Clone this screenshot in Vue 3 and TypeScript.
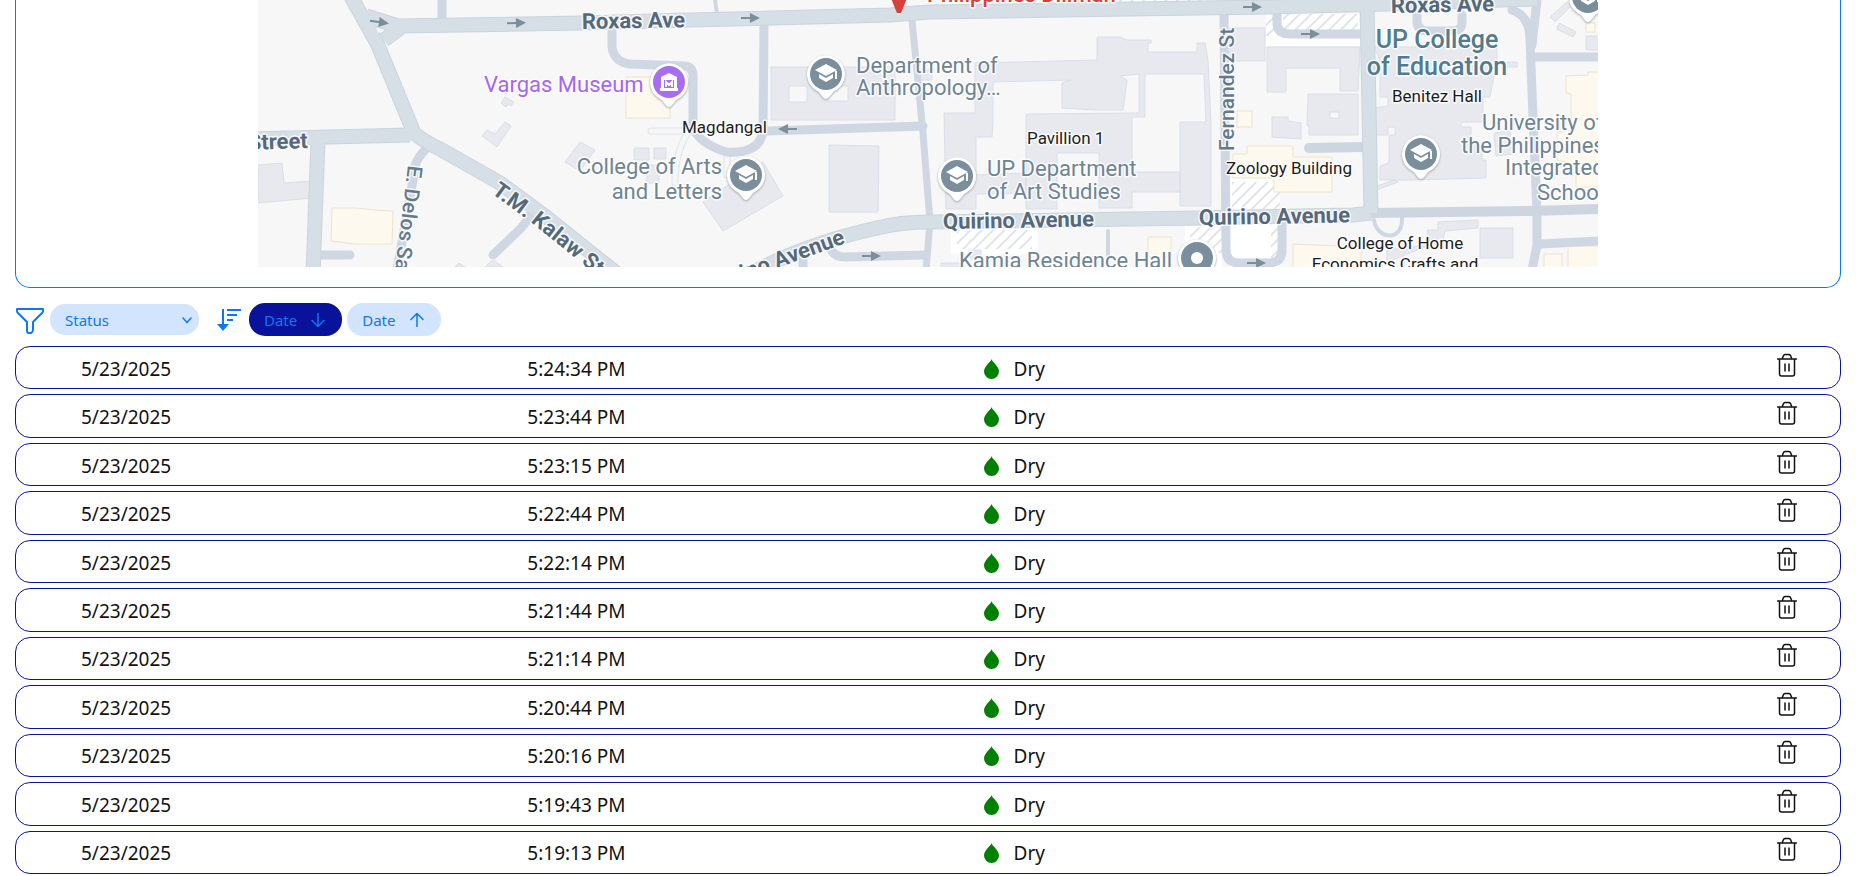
<script setup lang="ts">
import { ref, computed } from 'vue'

interface Reading {
  date: string
  time: string
  status: string
}

const times: string[] = [
  '5:24:34 PM', '5:23:44 PM', '5:23:15 PM', '5:22:44 PM', '5:22:14 PM', '5:21:44 PM',
  '5:21:14 PM', '5:20:44 PM', '5:20:16 PM', '5:19:43 PM', '5:19:13 PM',
]
const readings = ref<Reading[]>(times.map((time) => ({ date: '5/23/2025', time, status: 'Dry' })))
const status = ref('')
const order = ref<'desc' | 'asc'>('desc')

const visible = computed(() => {
  const list = readings.value.filter((r) => !status.value || r.status === status.value)
  return order.value === 'desc' ? list : [...list].reverse()
})

function remove(reading: Reading) {
  readings.value = readings.value.filter((r) => r !== reading)
}

// One-way arrows: x, y, rotation
const arrows: [number, number, number][] = [
  [379, 22, 8], [516, 23, -1], [750, 18, 0], [788, 129, 180],
  [871, 256, 0], [1252, 7, 0], [1256, 263, 0], [1310, 34, 0],
]
const schoolPins: [number, number][] = [[826, 74], [746, 175], [957, 176], [1421, 154], [1588, -3]]
</script>

<template>
  <main class="page">
    <section class="map-card" aria-label="Location">
      <svg class="map" viewBox="258 0 1340 267" role="img" aria-label="Campus map">
        <defs>
          <pattern id="hatch" width="8" height="8" patternUnits="userSpaceOnUse" patternTransform="rotate(45)">
            <rect width="8" height="8" fill="#ffffff" />
            <path d="M1 0V8" stroke="#e1e4ea" stroke-width="2" />
          </pattern>
          <path id="kalaw" d="M491 193L533 224L580 262L640 312" />
          <path id="pin" d="M0 25C-3 25-4 21-8 17.500A19 19 0 1 1 8 17.500C4 21 3 25 0 25Z" />
        </defs>
        <rect x="258" width="1340" height="267" fill="#f7f7f7" />

        <g class="paved">
          <rect x="951" y="228" width="87" height="26" />
          <rect x="1185" y="226" width="37" height="41" />
          <rect x="1230" y="178" width="50" height="89" />
          <rect x="1266" y="14" width="94" height="32" />
        </g>
        <g fill="url(#hatch)">
          <rect x="957" y="230" width="75" height="19" />
          <rect x="1190" y="227" width="32" height="26" />
          <rect x="1232" y="182" width="42" height="27" />
          <rect x="1271" y="190" width="9" height="70" />
          <rect x="1283" y="14" width="75" height="16" />
          <rect x="1090" y="0" width="117" height="5" />
          <rect x="1266" y="14" width="8" height="22" />
        </g>

        <g class="building">
          <path d="M258 165L282 163L284 183L311 181L312 198L258 203Z" />
          <path d="M505 97L514 102L511 106L508 104L506 107L501 103Z" />
          <path d="M505 122L511 126L497 147L482 136L487 130L495 134Z" />
          <path d="M580 142L595 150L580 171L565 162Z" />
          <path d="M485 267L493 260L503 267ZM455 267L459 263L465 267Z" />
          <path fill-rule="evenodd" d="M771 67H895V120H771ZM789 86V102H807V86ZM828 86V101H848V86Z" />
          <path d="M829 145L879 146L878 212L829 212Z" />
          <path d="M763 162L783 196L723 231L703 202Z" />
          <path d="M634 148H649V160H634ZM654 148H666V159H654ZM647 165H659V183H647Z" />
          <path d="M975 63L1097 60V37H1120L1127 40H1151V43H1148V52H1197V43H1205L1208 60L1211 123V206H1180V122H1206L1204 74H1145V117H1132V172H1180V192H1132V208H1099V153H1057V209H1026V114L1139 113V74L1120 76L1127 80L1123 110H1097L1062 108V83L1071 80L993 82V122L992 137H976V175L1026 173V193L976 194V209H946L944 113H975Z" />
          <rect x="1230" y="28" width="35" height="33" />
          <path d="M1267 47H1360L1358 91H1340V68H1286V92H1267Z" />
          <path fill-rule="evenodd" d="M1308 94H1358V135H1309V126L1307 125ZM1330 112V118H1339V112Z" />
          <path d="M1272 117H1288V121L1301 123V139L1272 137Z" />
          <path d="M1374 47H1497V60L1490 97H1483V122H1461V127H1471V137L1482 147V160H1486V178L1410 180H1380V166L1389 163V135H1395V127H1388V135H1374V108L1388 106V97H1380V60Z" />
          <path d="M1374 187L1395 180L1398 182L1376 190Z" />
          <path d="M1507 62H1517V67H1507ZM1494 133L1510 131L1513 154L1496 156Z" />
          <path d="M1427 230H1438V222L1478 220V228L1445 231L1443 240L1387 262V250L1430 245Z" />
          <path d="M1480 228H1513V258H1480Z" />
          <path d="M1550 17L1567 2L1571 6L1555 22ZM1559 23L1576 32L1573 37L1557 29ZM1586 36H1600V50H1586Z" />
          <path d="M970 250H981V258H970ZM941 263H960V270H941ZM918 70H932V80H918Z" />
        </g>
        <g class="landmark">
          <path d="M332 208H355L375 210L393 211L392 244L355 244L331 241Z" />
          <rect x="626" y="77" width="44" height="41" />
          <rect x="1237" y="111" width="15" height="16" />
          <path d="M1233 154H1247V146H1293V157H1332V192H1274V178H1233Z" />
          <rect x="1148" y="237" width="23" height="20" />
          <path d="M1293 244L1361 247V270H1293Z" />
          <path d="M1566 76L1588 75V72H1600V187H1576V165L1557 160V132L1571 130V94L1566 93Z" />
          <rect x="1586" y="23" width="9" height="9" />
          <rect x="1568" y="246" width="34" height="26" />
          <rect x="1544" y="254" width="18" height="18" />
        </g>

        <g class="lane">
          <path class="lane-edge" d="M651 131H684M688 133C681 142 675 160 675 183M727 154V175" />
          <path class="lane-fill" d="M651 131H684M688 133C681 142 675 160 675 183M727 154V175" />
        </g>

        <g class="minor">
          <path d="M322 255H350M426 149Q417 158 415 166L413 180L397 270M533 210Q526 224 517 232L493 255" />
          <path d="M442 0V20" />
          <path d="M612 32V47Q614 62 630 64L685 66Q693 67 693 76V127Q699 144 727 152Q760 154 763 131L764 25" />
          <path d="M768 131L923 126" />
          <path class="thin" d="M912 20L923 133L930 222L926 270" />
          <path d="M830 248Q834 257 845 257L925 255M803 257V270" />
          <path d="M1224 15L1226 250Q1226 262 1238 263H1270Q1282 262 1282 250V220" />
          <path d="M1277 12V24Q1278 34 1290 34H1362" />
          <path d="M1417 15V22Q1418 31 1428 31H1452Q1462 31 1462 22V15" />
          <path d="M1512 10Q1530 16 1530 40L1533 117L1537 213V245L1532 270" />
          <path d="M1537 0L1532 45M1537 57H1600M1540 244L1600 241" />
          <path class="narrow" d="M1374 220C1377 240 1403 242 1402 218M715 0L717 14M1108 231V256" />
        </g>
        <g class="stub">
          <path d="M1309 148L1365 147" />
          <path d="M1371 213L1533 211L1600 209" />
        </g>
        <g v-for="layer in ['road-edge', 'road']" :key="layer" :class="layer">
          <path d="M350 -5L377 43L414 133Q423 141 440 149L500 183L545 216L590 252L620 276" />
          <path d="M366 16L398 26L583 23L690 20L890 15L930 12L1130 9L1270 7L1387 4L1537 -1" />
          <path d="M250 139L410 135M318 140L313 275" />
          <path d="M384 40L400 28" />
          <path d="M745 277Q800 245 877 228Q900 222 930 222L1197 218L1353 215L1371 213M1367 5L1371 213" />
        </g>
        <path d="M376 28L382 30L378 33Z" fill="#f7f7f7" />

        <g v-for="(a, i) in arrows" :key="i" class="arrow" :transform="`translate(${a[0]} ${a[1]}) rotate(${a[2]})`">
          <path d="M-9 -1H0V-5L10 0L0 5V1H-9Z" />
        </g>

        <g class="street">
          <text x="582" y="29" transform="rotate(-1 582 29)">Roxas Ave</text>
          <text x="1391" y="13" transform="rotate(-1 1391 13)">Roxas Ave</text>
          <text x="308" y="148" text-anchor="end" transform="rotate(-2 308 148)">Street</text>
          <text x="943" y="229" transform="rotate(-1 943 229)">Quirino Avenue</text>
          <text x="1199" y="225" transform="rotate(-1 1199 225)">Quirino Avenue</text>
          <text x="846" y="243" text-anchor="end" transform="rotate(-20 846 243)">Quirino Avenue</text>
          <text><textPath href="#kalaw">T.M. Kalaw St</textPath></text>
          <text class="side" x="408" y="165" transform="rotate(97 408 165)">E. Delos Santos</text>
          <text class="side" x="1234" y="151" transform="rotate(-90 1234 151)">Fernandez St</text>
        </g>

        <g v-for="(p, i) in schoolPins" :key="i" class="pin" :transform="`translate(${p[0]} ${p[1]})`">
          <use href="#pin" />
          <circle r="16" fill="#7b8e9b" />
          <path d="M0 -10L11 -4L0 2L-11 -4ZM-7 0L0 4L7 0V4L0 8L-7 4ZM9 -3H11V5H9Z" fill="#ffffff" />
        </g>
        <g class="pin" transform="translate(1197 258)">
          <use href="#pin" />
          <circle r="16" fill="#7b8e9b" />
          <circle r="6" fill="#ffffff" />
        </g>
        <g class="pin" transform="translate(669 82)">
          <use href="#pin" />
          <circle r="16" fill="#a96ef0" />
          <path d="M0 -9L8 -5V-2H-8V-5ZM-8 -2H-5V6H-8ZM8 -2H5V6H8ZM-9 6H9V9H-9Z" fill="#ffffff" />
          <path d="M-3 5V0L0 3L3 0V5" fill="none" stroke="#ffffff" stroke-width="2" />
        </g>
        <path d="M891 -2H907Q904 6 901 13H897Q894 6 891 -2Z" fill="#d3433c" />

        <g class="place">
          <text class="museum" x="484" y="92">Vargas Museum</text>
          <text x="856" y="73">Department of</text>
          <text x="856" y="95">Anthropology…</text>
          <text x="722" y="174" text-anchor="end">College of Arts</text>
          <text x="722" y="199" text-anchor="end">and Letters</text>
          <text x="987" y="176">UP Department</text>
          <text x="987" y="199">of Art Studies</text>
          <text x="959" y="268">Kamia Residence Hall</text>
          <text x="1482" y="130">University of</text>
          <text x="1461" y="153">the Philippines</text>
          <text x="1505" y="175">Integrated</text>
          <text x="1537" y="200">School</text>
          <text class="campus" x="927" y="2">Philippines Diliman</text>
        </g>
        <g class="college">
          <text x="1437" y="48" text-anchor="middle">UP College</text>
          <text x="1437" y="75" text-anchor="middle">of Education</text>
        </g>
        <g class="hall">
          <text x="682" y="133">Magdangal</text>
          <text x="1027" y="144">Pavillion 1</text>
          <text x="1226" y="174">Zoology Building</text>
          <text x="1392" y="102">Benitez Hall</text>
          <text x="1400" y="249" text-anchor="middle">College of Home</text>
          <text x="1395" y="270" text-anchor="middle">Economics Crafts and</text>
        </g>
      </svg>
    </section>

    <div class="toolbar">
      <svg class="filter-icon" viewBox="0 0 28 28" aria-hidden="true">
        <path d="M1 2H27V4Q27 5 26 6L17 15V23Q17 25 15 26H13Q11 26 11 24V15L2 6Q1 5 1 4Z" />
      </svg>
      <div class="select-wrap">
        <select v-model="status" aria-label="Status">
          <option value="">Status</option>
          <option value="Dry">Dry</option>
          <option value="Wet">Wet</option>
        </select>
        <svg class="chevron" viewBox="0 0 20 16" aria-hidden="true"><path d="M2 2L10 11L18 2" /></svg>
      </div>
      <svg class="sort-icon" viewBox="0 0 24 24" aria-hidden="true">
        <path d="M6 1V17M10 2H24M10 7H20M10 12H16" />
        <path class="head" d="M0 16H12L6 23Z" />
      </svg>
      <div class="sorts">
        <button type="button" :class="{ active: order === 'desc' }" @click="order = 'desc'">
          Date
          <svg viewBox="0 0 28 28" aria-hidden="true"><path d="M14 1V27M2 15L14 27L26 15" /></svg>
        </button>
        <button type="button" :class="{ active: order === 'asc' }" @click="order = 'asc'">
          Date
          <svg viewBox="0 0 28 28" aria-hidden="true"><path d="M14 27V1M2 13L14 1L26 13" /></svg>
        </button>
      </div>
    </div>

    <table class="readings" aria-label="Readings">
      <tbody>
        <tr v-for="r in visible" :key="r.time">
          <td>{{ r.date }}</td>
          <td>{{ r.time }}</td>
          <td class="state">
            <svg viewBox="0 0 15 20" aria-hidden="true">
              <path d="M7.500 0C8 3 15 7 15 12.500A7.500 7.500 0 0 1 0 12.500C0 7 7 3 7.500 0Z" />
            </svg>
            {{ r.status }}
          </td>
          <td class="actions">
            <button type="button" aria-label="Delete" @click="remove(r)">
              <svg viewBox="0 0 40 48" aria-hidden="true">
                <path d="M1 12H39M5 12V42Q5 46 9 46H31Q35 46 35 42V12M11 10L13 5Q14 3 17 3H23Q26 3 27 5L29 10M16 22V36M24 22V36" />
              </svg>
            </button>
          </td>
        </tr>
      </tbody>
    </table>
  </main>
</template>

<style>
body {
  margin: 0;
  background: #ffffff;
}
</style>

<style scoped>
.page {
  box-sizing: border-box;
  display: flex;
  flex-direction: column;
  min-height: 100vh;
  padding: 0 15px 2px;
  color: #111111;
  font-family: "Segoe UI", "Noto Sans", "Open Sans", sans-serif;
}
.map-card {
  display: flex;
  justify-content: center;
  padding-bottom: 20px;
  border: 1px solid #0d78f2;
  border-top: 0;
  border-radius: 0 0 15px 15px;
}
.map {
  display: block;
  width: 100%;
  max-width: 1340px;
  font-family: Roboto, sans-serif;
}
.paved { fill: #ffffff; }
.building { fill: #e8e9ee; stroke: #d9deea; }
.landmark { fill: #fdf9ee; stroke: #f0e2cb; stroke-width: 1; }
.lane path { fill: none; stroke-linecap: round; }
.lane-edge { stroke: #e0e4e8; stroke-width: 7; }
.lane-fill { stroke: #f5f6f6; stroke-width: 5; }
.minor path { fill: none; stroke: #cfd7e3; stroke-width: 9; stroke-linecap: round; }
.minor .thin { stroke-width: 7; }
.minor .narrow { stroke-width: 4; }
.stub path { fill: none; stroke: #cdd6e0; stroke-width: 10; stroke-linecap: round; }
.road-edge path { fill: none; stroke: #c9d4df; stroke-width: 15; stroke-linejoin: round; }
.road path { fill: none; stroke: #d6dfe6; stroke-width: 13; stroke-linejoin: round; }
.arrow { fill: #7b8e99; }
.map text { paint-order: stroke; stroke: #ffffff; stroke-width: 3px; stroke-linejoin: round; stroke-opacity: 0.8; }
.street { fill: #56697a; font-size: 22px; font-weight: 700; }
.street .side { fill: #647a8a; font-size: 21px; font-weight: 500; }
.place { fill: #6e8493; font-size: 22px; }
.place .museum { fill: #a766f0; }
.place .campus { fill: #d3433c; font-weight: 500; }
.college { fill: #527b8b; font-size: 25px; font-weight: 500; }
.hall { fill: #1c1c1c; font-size: 17px; }
.pin use { fill: #ffffff; filter: drop-shadow(0 1px 1px #9ba5ad); }

.toolbar {
  display: flex;
  align-items: center;
  height: 33px;
  margin: 15px 0 10px;
  color: #0d78f2;
  font-size: 15px;
}
.toolbar svg {
  fill: none;
  stroke: currentColor;
  stroke-width: 2;
  stroke-linecap: round;
  stroke-linejoin: round;
}
.toolbar .filter-icon {
  width: 28px;
  height: 28px;
  margin: 2px 6px 0 1px;
}
.select-wrap {
  position: relative;
  display: flex;
}
.select-wrap select {
  appearance: none;
  width: 149px;
  height: 31px;
  padding: 0 28px 0 15px;
  border: 0;
  border-radius: 15px;
  background: #d3e4ff;
  color: inherit;
  font: inherit;
}
.toolbar .chevron {
  position: absolute;
  top: 13px;
  right: 7px;
  width: 10px;
  height: 8px;
  stroke-width: 3;
  pointer-events: none;
}
.toolbar .sort-icon {
  width: 24px;
  height: 24px;
  margin: 0 8px 0 18px;
  stroke-linecap: butt;
}
.sort-icon .head { fill: currentColor; stroke: none; }
.sorts {
  display: flex;
  gap: 5px;
}
.sorts button {
  display: flex;
  align-items: center;
  gap: 14px;
  height: 33px;
  padding: 0 17px 0 15px;
  border: 0;
  border-radius: 16px;
  background: #d3e4ff;
  color: inherit;
  font: inherit;
  cursor: pointer;
}
.sorts .active { background: #08129a; }
.toolbar .sorts svg {
  width: 14px;
  height: 14px;
  stroke-width: 3;
}

.readings {
  display: flex;
  flex: 1;
  font-size: 19px;
}
.readings tbody {
  display: grid;
  flex: 1;
  grid-auto-rows: 1fr;
  gap: 5px;
}
.readings tr {
  display: grid;
  grid-template-columns: 45fr 46fr 80fr auto;
  align-items: center;
  padding: 0 43px 0 65px;
  border: 1px solid #0a1496;
  border-radius: 15px;
}
.readings td {
  padding: 2px 0 0;
  line-height: 24px;
}
.readings .state {
  display: flex;
  align-items: center;
  gap: 15px;
}
.state svg {
  width: 15px;
  height: 20px;
  fill: #008000;
}
.actions button {
  display: block;
  margin-bottom: 8px;
  padding: 0;
  border: 0;
  background: none;
  color: #111111;
  cursor: pointer;
}
.actions svg {
  display: block;
  width: 20px;
  height: 24px;
  fill: none;
  stroke: currentColor;
  stroke-width: 3;
  stroke-linecap: round;
}
</style>
